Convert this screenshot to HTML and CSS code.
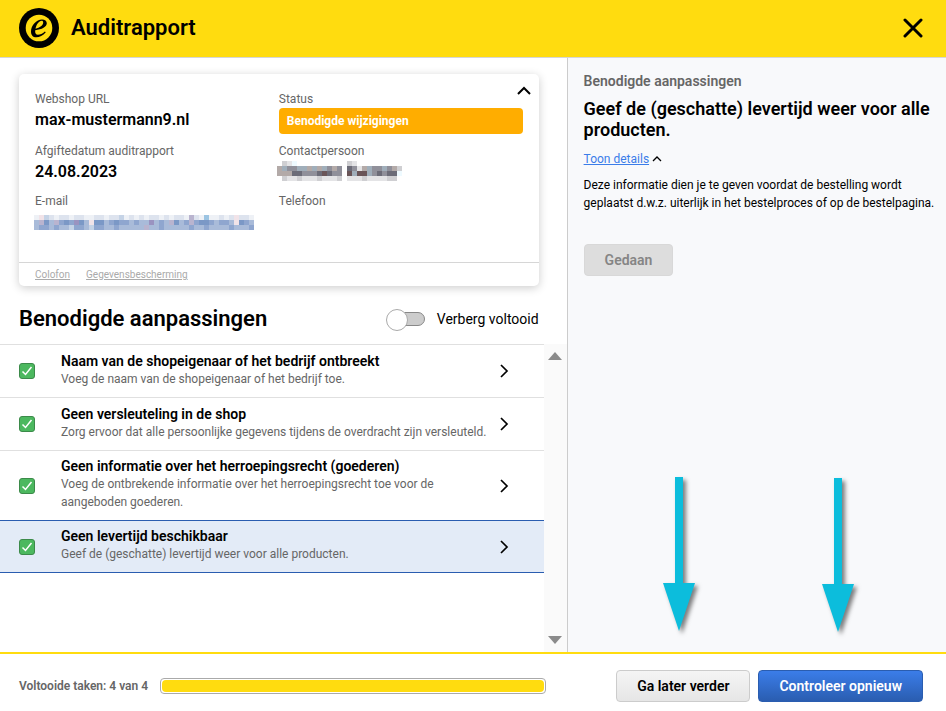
FILE: index.html
```html
<!DOCTYPE html>
<html lang="nl">
<head>
    <meta charset="UTF-8">
    <meta name="viewport" content="width=device-width, initial-scale=1.0">
    <title>Auditrapport</title>
    <link rel="stylesheet" href="styles.css">
</head>
<body>
    <header class="topbar">
        <svg class="logo" viewBox="0 0 40 40" aria-hidden="true">
            <circle cx="20" cy="20" r="20" fill="#000"/>
            <circle cx="20" cy="20" r="13.300" fill="#ffdc0f"/>
            <path fill-rule="evenodd" d="M26.800 24.300C24 27.500 20.500 29.300 17.300 29.300C13.800 29.300 12 27 12 23.500C12 17.500 17.500 11.500 23 11.500C26 11.500 27.800 12.900 27.800 15.200C27.800 18.800 23 21.400 16.200 22.200C15.900 25 16.800 26.700 18.900 26.700C21.200 26.700 23.500 25.500 25.900 23.400ZM16.500 20.700C20.800 19.900 24.200 17.300 24.200 14.500C24.200 13.300 23.600 12.800 22.600 12.800C20 12.800 17.300 16.600 16.500 20.700Z"/>
        </svg>
        <h1>Auditrapport</h1>
        <button class="close-button" aria-label="Sluiten">
            <svg viewBox="0 0 20 20"><path d="M2 2 18 18M18 2 2 18" stroke="#000" stroke-width="3" stroke-linecap="round"/></svg>
        </button>
    </header>

    <main class="content">
        <section class="left">
            <div class="card">
                <div class="card-body">
                    <dl class="info">
                        <div class="field">
                            <dt>Webshop URL</dt>
                            <dd>max-mustermann9.nl</dd>
                        </div>
                        <div class="field">
                            <dt>Afgiftedatum auditrapport</dt>
                            <dd>24.08.2023</dd>
                        </div>
                        <div class="field">
                            <dt>E-mail</dt>
                            <dd><svg class="mosaic mosaic-mail" id="mailMosaic" aria-hidden="true"></svg></dd>
                        </div>
                    </dl>
                    <dl class="info">
                        <div class="field">
                            <dt>Status</dt>
                            <dd class="badge">Benodigde wijzigingen</dd>
                        </div>
                        <div class="field">
                            <dt>Contactpersoon</dt>
                            <dd><svg class="mosaic mosaic-name" id="nameMosaic" aria-hidden="true"></svg></dd>
                        </div>
                        <div class="field">
                            <dt>Telefoon</dt>
                            <dd></dd>
                        </div>
                    </dl>
                    <button class="collapse" aria-label="Inklappen">
                        <svg viewBox="0 0 14 9"><path d="M1 8 7 2 13 8" fill="none" stroke="#000" stroke-width="2"/></svg>
                    </button>
                </div>
                <div class="card-links">
                    <a href="#">Colofon</a>
                    <a href="#">Gegevensbescherming</a>
                </div>
            </div>

            <div class="list-head">
                <h2>Benodigde aanpassingen</h2>
                <label class="toggle">
                    <input type="checkbox">
                    <span class="track"></span>
                    Verberg voltooid
                </label>
            </div>

            <div class="list-area">
                <ul class="tasks">
                    <li class="task">
                        <input type="checkbox" id="t1" checked>
                        <label for="t1">
                            <strong>Naam van de shopeigenaar of het bedrijf ontbreekt</strong>
                            <span>Voeg de naam van de shopeigenaar of het bedrijf toe.</span>
                        </label>
                        <svg class="chevron" viewBox="0 0 10 14"><path d="M2 1 8 7 2 13"/></svg>
                    </li>
                    <li class="task">
                        <input type="checkbox" id="t2" checked>
                        <label for="t2">
                            <strong>Geen versleuteling in de shop</strong>
                            <span>Zorg ervoor dat alle persoonlijke gegevens tijdens de overdracht zijn versleuteld.</span>
                        </label>
                        <svg class="chevron" viewBox="0 0 10 14"><path d="M2 1 8 7 2 13"/></svg>
                    </li>
                    <li class="task">
                        <input type="checkbox" id="t3" checked>
                        <label for="t3">
                            <strong>Geen informatie over het herroepingsrecht (goederen)</strong>
                            <span>Voeg de ontbrekende informatie over het herroepingsrecht toe voor de aangeboden goederen.</span>
                        </label>
                        <svg class="chevron" viewBox="0 0 10 14"><path d="M2 1 8 7 2 13"/></svg>
                    </li>
                    <li class="task active">
                        <input type="checkbox" id="t4" checked>
                        <label for="t4">
                            <strong>Geen levertijd beschikbaar</strong>
                            <span>Geef de (geschatte) levertijd weer voor alle producten.</span>
                        </label>
                        <svg class="chevron" viewBox="0 0 10 14"><path d="M2 1 8 7 2 13"/></svg>
                    </li>
                </ul>
                <div class="scrollbar">
                    <svg viewBox="0 0 14 8"><path d="M0 8 7 0 14 8Z"/></svg>
                    <svg viewBox="0 0 14 8"><path d="M0 0H14L7 8Z"/></svg>
                </div>
            </div>
        </section>

        <aside class="right">
            <p class="eyebrow">Benodigde aanpassingen</p>
            <h2>Geef de (geschatte) levertijd weer voor alle producten.</h2>
            <p class="details">
                <a href="#">Toon details</a>
                <svg viewBox="0 0 10 6"><path d="M1 5 5 1 9 5" fill="none" stroke="#000" stroke-width="1.300"/></svg>
            </p>
            <p class="text">Deze informatie dien je te geven voordat de bestelling wordt geplaatst d.w.z. uiterlijk in het bestelproces of op de bestelpagina.</p>
            <button class="btn done" disabled>Gedaan</button>
            <svg class="arrow arrow-later" viewBox="0 0 38 160"><path d="M12 0H20V106H32L16 154 0 106H12Z"/></svg>
            <svg class="arrow arrow-check" viewBox="0 0 38 160"><path d="M12 0H20V106H32L16 154 0 106H12Z"/></svg>
        </aside>
    </main>

    <footer class="bottombar">
        <label for="progress">Voltooide taken: 4 van 4</label>
        <progress id="progress" value="4" max="4"></progress>
        <div class="actions">
            <button class="btn later">Ga later verder</button>
            <button class="btn primary">Controleer opnieuw</button>
        </div>
    </footer>

    <script>
        // Private data is shown as 5px blocks, one palette letter per block
        const palette = {
            a: '#eef1f6', b: '#dde3ee', c: '#c5d3e6', d: '#a9bbd9', e: '#8fa6cf', f: '#7b98c6',
            g: '#b9b4cf', h: '#9a93c0', i: '#f1e3e8', j: '#9cc4e2',
            m: '#e4e4e6', n: '#cfcfd2', o: '#b3aaa8', p: '#90909a', q: '#6c6c78', r: '#6a5558', s: '#a0aeba', t: '#eefaff'
        };

        function drawMosaic(id, rows) {
            const svg = document.getElementById(id);
            const width = rows[0].length * 5;
            const height = rows.length * 5;
            svg.setAttribute('viewBox', `0 0 ${width} ${height}`);
            svg.setAttribute('width', width);
            svg.setAttribute('height', height);
            svg.setAttribute('shape-rendering', 'crispEdges');

            rows.forEach((row, y) => {
                [...row].forEach((key, x) => {
                    if (palette[key]) {
                        svg.innerHTML += `<rect x="${x * 5}" y="${y * 5}" width="5" height="5" fill="${palette[key]}"/>`;
                    }
                });
            });
        }

        drawMosaic('mailMosaic', [
            'aicbabbabbaabbabbcabababbababbagbajaababibba',
            'dgfdgefehfdiffdefeededdhdedgfdegeffedeedifed',
            'deededdceedceeddedddddgddedddddeddeddddeddde'
        ]);
        drawMosaic('nameMosaic', [
            ' nmt          nm         ',
            'osppssosospop qpmosppspon',
            'oooqqpppqrqpp rsrrspqpqqt',
            ' nmmnmmmnmmmn mmmnmmmmnn '
        ]);
    </script>
</body>
</html>
```
FILE: styles.css
```css
* {
    margin: 0;
    padding: 0;
    box-sizing: border-box;
}

body {
    min-height: 100vh;
    display: flex;
    flex-direction: column;
    font-family: Roboto, sans-serif;
    font-size: 12px;
    line-height: 18px;
    color: #000;
    background: #fff;
}

button, input {
    font-family: inherit;
}

.topbar {
    display: flex;
    align-items: center;
    height: 58px;
    padding: 0 23px 2px 19px;
    background: #ffdc0f;
    border-bottom: 1px solid #d6d6d6;
}

.logo {
    width: 40px;
    height: 40px;
    margin-right: 12px;
}

h1 {
    font-size: 22px;
    font-weight: 600;
    line-height: 28px;
}

.close-button {
    margin-left: auto;
    width: 20px;
    height: 20px;
    background: none;
    border: none;
    cursor: pointer;
}

.content {
    flex: 1;
    display: grid;
    grid-template-columns: minmax(0, 3fr) minmax(0, 2fr);
}

.left {
    display: flex;
    flex-direction: column;
    border-right: 1px solid #ccc;
}

.card {
    margin: 16px 28px 0 19px;
    border-radius: 5px;
    box-shadow: 0 2px 10px rgba(0, 0, 0, 0.2);
}

.card-body {
    position: relative;
    display: grid;
    grid-template-columns: 1fr 1fr;
    height: 188px;
    padding: 16px;
}

.field {
    height: 50px;
}

.field:first-child {
    height: 52px;
}

dt {
    color: #666;
}

dd {
    font-size: 16px;
    font-weight: 600;
    line-height: 24px;
}

dd.badge {
    padding: 0 8px;
    line-height: 26px;
    font-size: 12px;
    font-weight: 700;
    color: #fff;
    background: #ffad00;
    border-radius: 4px;
}

.mosaic {
    display: block;
}

.mosaic-mail {
    margin: 5px 0 0 -1px;
}

.mosaic-name {
    margin: 1px 0 0 -2px;
}

.collapse {
    position: absolute;
    top: 12px;
    right: 8px;
    width: 14px;
    height: 9px;
    display: flex;
    background: none;
    border: none;
    cursor: pointer;
}

.card-links {
    display: flex;
    gap: 16px;
    padding: 3px 16px 2px;
    border-top: 1px solid #d6d6d6;
    font-size: 10px;
}

.card-links a {
    color: #aaa;
}

.list-head {
    display: flex;
    align-items: center;
    justify-content: space-between;
    height: 58px;
    padding: 8px 28px 0 19px;
}

.list-head h2 {
    font-size: 22px;
    font-weight: 600;
    line-height: 28px;
}

.toggle {
    display: flex;
    align-items: center;
    font-size: 14px;
    cursor: pointer;
}

.toggle input {
    position: absolute;
    opacity: 0;
}

.track {
    position: relative;
    width: 36px;
    height: 14px;
    margin-right: 12px;
    background: #ccc;
    border: 1px solid #888;
    border-radius: 7px;
}

.track::before {
    content: "";
    position: absolute;
    left: -4px;
    top: -4px;
    width: 20px;
    height: 20px;
    background: #fff;
    border: 1px solid #aaa;
    border-radius: 50%;
}

.toggle input:checked + .track::before {
    left: 18px;
}

.list-area {
    flex: 1;
    display: flex;
}

.tasks {
    flex: 1;
    list-style: none;
}

.task {
    display: flex;
    align-items: center;
    min-height: 53px;
    padding: 6px 35px 6px 19px;
    border-top: 1px solid #e0e0e0;
}

.task input {
    appearance: none;
    width: 16px;
    height: 16px;
    background: #4cb85f url("data:image/svg+xml,%3Csvg xmlns='http://www.w3.org/2000/svg' viewBox='0 0 14 14'%3E%3Cpath d='M2.500 7.500 5.500 10.500 11.500 3' fill='none' stroke='white' stroke-width='1.500'/%3E%3C/svg%3E");
    border: 1px solid #3c8a4a;
    border-radius: 3px;
}

.task label {
    flex: 1;
    margin-left: 26px;
    padding-bottom: 3px;
}

.task strong {
    display: block;
    font-size: 14px;
    font-weight: 600;
}

.task span {
    display: block;
    color: #666;
}

.chevron {
    width: 10px;
    height: 14px;
    fill: none;
    stroke: #000;
    stroke-width: 1.7;
}

.task.active {
    background: #e3ebf7;
    border-top: 1px solid #2a5db0;
    border-bottom: 1px solid #2a5db0;
}

.scrollbar {
    width: 23px;
    display: flex;
    flex-direction: column;
    align-items: center;
    justify-content: space-between;
    padding: 8px 0;
    background: #fafafa;
}

.scrollbar svg {
    width: 14px;
    height: 8px;
    fill: #8b8b8b;
}

.right {
    position: relative;
    padding: 14px 11px 16px 16px;
    background: #f8f9fb;
}

.eyebrow {
    font-size: 14px;
    font-weight: 600;
    color: #666;
}

.right h2 {
    margin-top: 8px;
    font-size: 18px;
    font-weight: 600;
    line-height: 21px;
}

.details {
    display: flex;
    align-items: center;
    gap: 3px;
    margin: 10px 0 8px;
}

.details a {
    color: #3b7de9;
}

.details svg {
    width: 10px;
    height: 6px;
}

.text {
    margin-bottom: 32px;
}

.btn {
    height: 32px;
    padding: 0 20px;
    font-size: 14px;
    font-weight: 600;
    border: 1px solid #ccc;
    border-radius: 4px;
    cursor: pointer;
}

.btn.done {
    color: #858585;
    background: #ddd;
    border-color: #d8d8d8;
}

.btn.later {
    color: #000;
    background: linear-gradient(#f5f5f5, #e6e6e6);
}

.btn.primary {
    color: #fff;
    background: linear-gradient(#3b7de9, #2a5db0);
    border-color: #2a5db0;
}

/* Arrows pointing at the footer buttons */
.arrow {
    position: absolute;
    width: 38px;
    height: 160px;
    fill: #0cbddc;
    overflow: visible;
    filter: drop-shadow(3px 3px 2px rgba(0, 0, 0, 0.5));
}

.arrow-later {
    right: 245px;
    bottom: 15px;
}

.arrow-check {
    right: 86px;
    bottom: 14px;
}

.bottombar {
    display: flex;
    align-items: center;
    padding: 16px 23px 9px 19px;
    border-top: 2px solid #ffdc0f;
}

.bottombar label {
    font-weight: 600;
    color: #666;
}

progress {
    appearance: none;
    flex: 1;
    height: 16px;
    margin: 0 70px 0 12px;
    padding: 1px;
    background: #fff;
    border: 1px solid #aaa;
    border-radius: 4px;
}

progress::-webkit-progress-bar {
    background: #fff;
}

progress::-webkit-progress-value {
    background: #ffdc0f;
    border-radius: 4px;
}

.actions {
    display: flex;
    gap: 8px;
}
```
